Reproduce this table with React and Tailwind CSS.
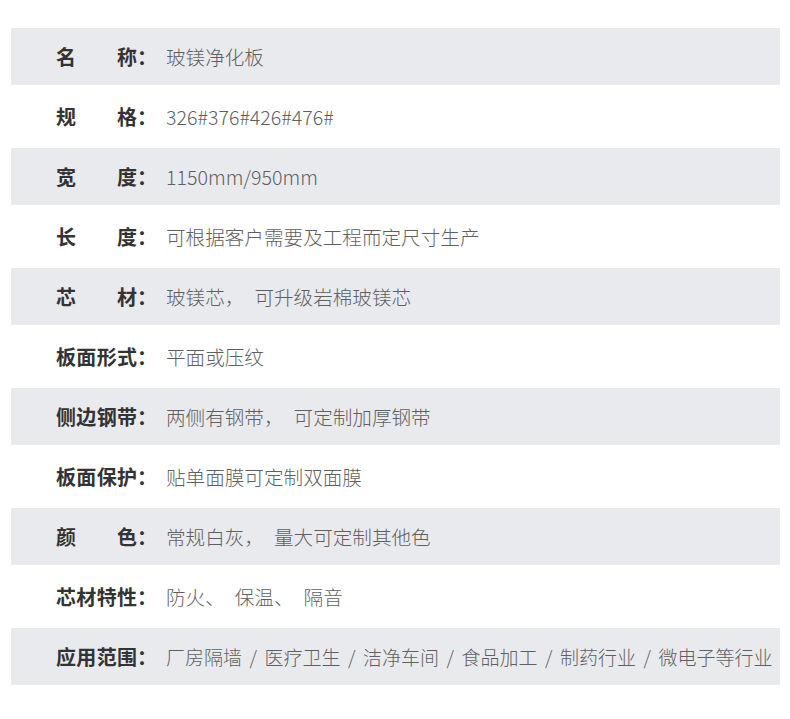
import React from "react";

const rows = [
  { label: ["名", "称"], value: "玻镁净化板" },
  { label: ["规", "格"], value: "326#376#426#476#" },
  { label: ["宽", "度"], value: "1150mm/950mm" },
  { label: ["长", "度"], value: "可根据客户需要及工程而定尺寸生产" },
  { label: ["芯", "材"], value: "玻镁芯， 可升级岩棉玻镁芯" },
  { label: ["板", "面", "形", "式"], value: "平面或压纹" },
  { label: ["侧", "边", "钢", "带"], value: "两侧有钢带， 可定制加厚钢带" },
  { label: ["板", "面", "保", "护"], value: "贴单面膜可定制双面膜" },
  { label: ["颜", "色"], value: "常规白灰， 量大可定制其他色" },
  { label: ["芯", "材", "特", "性"], value: "防火、 保温、 隔音" },
  {
    label: ["应", "用", "范", "围"],
    value: ["厂房隔墙", "医疗卫生", "洁净车间", "食品加工", "制药行业", "微电子等行业"],
  },
];

function Value({ v }) {
  if (Array.isArray(v)) {
    return (
      <div className="text-[19px] font-light text-[#5f5f5f] leading-none whitespace-nowrap">
        {v.map((s, j) => (
          <React.Fragment key={j}>
            {j > 0 && <span className="mx-[7.5px]">/</span>}
            <span>{s}</span>
          </React.Fragment>
        ))}
      </div>
    );
  }
  const parts = v.split(" ");
  return (
    <div className="text-[19.6px] font-light text-[#5f5f5f] leading-none whitespace-nowrap">
      {parts.map((s, j) => (
        <React.Fragment key={j}>
          {j > 0 && <span className="inline-block w-[10px]" />}
          <span>{s}</span>
        </React.Fragment>
      ))}
    </div>
  );
}

export default function App() {
  return (
    <div
      className="w-[790px] h-[719px] bg-white px-[11px] pt-[28px]"
      style={{ fontFamily: '"Noto Sans CJK SC", "Noto Sans", sans-serif' }}
    >
      <div className="w-[769px] flex flex-col">
        {rows.map((r, i) => (
          <div
            key={i}
            className={
              "flex items-center " +
              (i % 2 === 0 ? "h-[57px] bg-[#e9eaee]" : "h-[63px] bg-white")
            }
          >
            <div className="w-[155px] pl-[45px] flex items-center shrink-0">
              <div className="w-[81px] flex justify-between text-[20px] font-bold text-[#333333] leading-none">
                {r.label.map((c, j) => (
                  <span key={j}>{c}</span>
                ))}
              </div>
              <span className="text-[20px] font-bold text-[#333333] leading-none">：</span>
            </div>
            <Value v={r.value} />
          </div>
        ))}
      </div>
    </div>
  );
}
